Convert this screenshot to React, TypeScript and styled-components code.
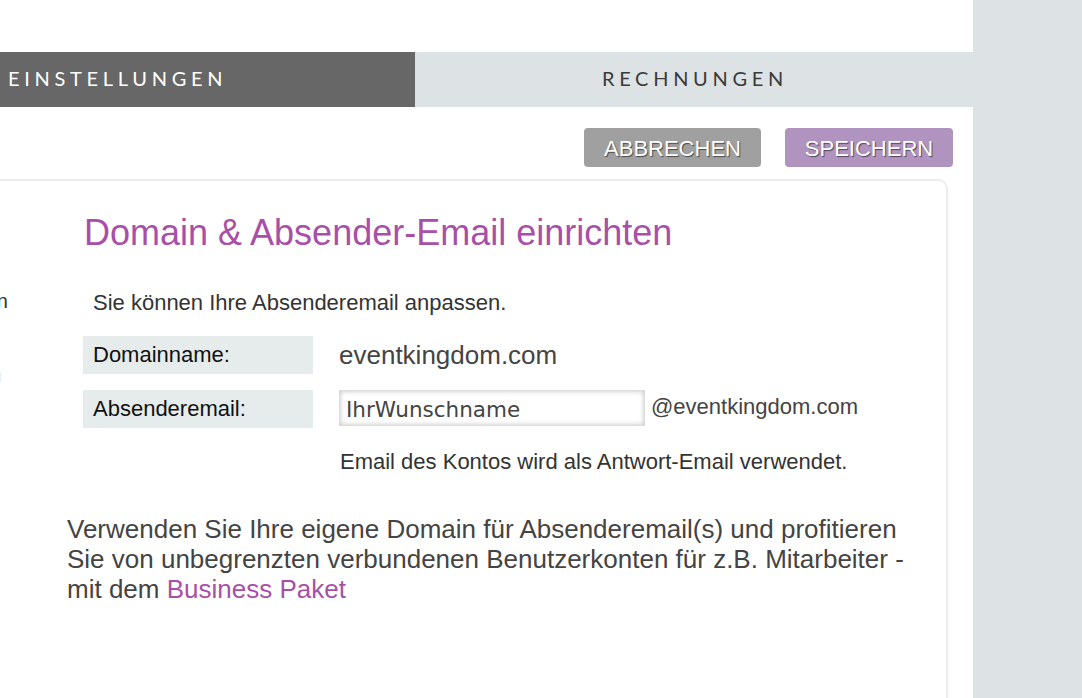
import styled, { createGlobalStyle } from 'styled-components';

const GlobalStyle = createGlobalStyle`
  html, body {
    margin: 0;
    padding: 0;
    background: #ffffff;
    overflow: hidden;
  }
  body {
    font-family: "Liberation Sans", Arial, sans-serif;
  }
`;

function App() {
  return (
    <>
      <GlobalStyle />
      <Page>
        <Main>
          <Tabs>
            <Tab $active>EINSTELLUNGEN</Tab>
            <Tab $center>RECHNUNGEN</Tab>
          </Tabs>
          <Actions>
            <ActionBtn $color="#a0a0a0" $width={177}>ABBRECHEN</ActionBtn>
            <ActionBtn $color="#b094bf" $width={168}>SPEICHERN</ActionBtn>
          </Actions>
          <Card>
            <SideNav>
              <SideItem>Konto einrichten</SideItem>
              <SideItem $faint>Domain einrichten</SideItem>
            </SideNav>
            <Content>
              <Title>Domain &amp; Absender-Email einrichten</Title>
              <Intro>Sie können Ihre Absenderemail anpassen.</Intro>
              <FormRow>
                <Label>Domainname:</Label>
                <Value>eventkingdom.com</Value>
              </FormRow>
              <FormRow>
                <Label>Absenderemail:</Label>
                <Input defaultValue="IhrWunschname" />
                <Suffix>@eventkingdom.com</Suffix>
              </FormRow>
              <Hint>Email des Kontos wird als Antwort-Email verwendet.</Hint>
              <Promo>
                Verwenden Sie Ihre eigene Domain für Absenderemail(s) und profitieren
                Sie von unbegrenzten verbundenen Benutzerkonten für z.B. Mitarbeiter -
                mit dem <PromoLink href="#">Business Paket</PromoLink>
              </Promo>
            </Content>
          </Card>
        </Main>
        <RightPanel />
      </Page>
    </>
  );
}

export default App;

const Page = styled.div`
  display: flex;
  width: 1082px;
  height: 698px;
  overflow: hidden;
`;

const Main = styled.div`
  width: 973px;
  flex: none;
  padding-top: 52px;
  box-sizing: border-box;
`;

const RightPanel = styled.div`
  flex: 1;
  background: #dde2e4;
`;

const Tabs = styled.div`
  display: flex;
  height: 55px;
`;

const Tab = styled.div<{ $active?: boolean; $center?: boolean }>`
  display: flex;
  align-items: center;
  justify-content: ${(p) => (p.$center ? 'center' : 'flex-start')};
  width: ${(p) => (p.$active ? '415px' : 'auto')};
  flex: ${(p) => (p.$active ? 'none' : '1')};
  padding-left: ${(p) => (p.$active ? '8px' : '2px')};
  padding-bottom: 4px;
  box-sizing: border-box;
  background: ${(p) => (p.$active ? '#676767' : '#dde2e5')};
  color: ${(p) => (p.$active ? '#ffffff' : '#3a3a3a')};
  font-family: Lato, "Open Sans", sans-serif;
  font-size: 20px;
  letter-spacing: 4.7px;
`;

const Actions = styled.div`
  display: flex;
  justify-content: flex-end;
  gap: 24px;
  padding: 21px 20px 0 0;
`;

const ActionBtn = styled.button<{ $color: string; $width: number }>`
  width: ${(p) => p.$width}px;
  height: 39px;
  border: none;
  border-radius: 4px;
  background: ${(p) => p.$color};
  color: #ffffff;
  font-family: "Liberation Sans", Arial, sans-serif;
  font-size: 22px;
  line-height: 39px;
  padding: 1px 0 0;
  text-shadow: 1px 1px 1px rgba(0, 0, 0, 0.55);
  cursor: pointer;
`;

const Card = styled.div`
  display: flex;
  margin: 12px 25px 0 -300px;
  height: 600px;
  border: 2px solid #ececec;
  border-radius: 10px;
  background: #ffffff;
`;

const SideNav = styled.div`
  width: 310px;
  flex: none;
  padding-top: 108px;
  display: flex;
  flex-direction: column;
  align-items: flex-end;
  gap: 50px;
  overflow: hidden;
`;

const SideItem = styled.div<{ $faint?: boolean }>`
  font-size: 20px;
  line-height: 24px;
  color: ${(p) => (p.$faint ? '#e4e4e4' : '#333333')};
  white-space: nowrap;
  margin-right: ${(p) => (p.$faint ? '10px' : '4px')};
`;

const Content = styled.div`
  flex: 1;
  padding: 32px 0 0 55px;
`;

const Title = styled.h1`
  margin: 0 0 0 17px;
  font-weight: normal;
  font-size: 36px;
  color: #a850a8;
  line-height: 40px;
`;

const Intro = styled.p`
  margin: 37px 0 20px 26px;
  font-size: 22px;
  line-height: 26px;
  color: #333333;
`;

const FormRow = styled.div`
  display: flex;
  align-items: center;
  margin: 0 0 16px 16px;
`;

const Label = styled.div`
  width: 230px;
  height: 38px;
  box-sizing: border-box;
  padding: 0 0 0 10px;
  display: flex;
  align-items: center;
  background: #e6ecec;
  font-size: 22px;
  color: #111111;
  margin-right: 26px;
`;

const Value = styled.div`
  font-size: 26px;
  line-height: 30px;
  color: #444444;
`;

const Input = styled.input`
  width: 306px;
  height: 36px;
  box-sizing: border-box;
  border: 1px solid #dddddd;
  padding: 3px 6px 0;
  font-family: "DejaVu Sans", sans-serif;
  font-size: 21.5px;
  color: #444444;
  box-shadow: inset 0 0 5px rgba(0, 0, 0, 0.25);
  outline: none;
  margin-top: -2px;
`;

const Suffix = styled.div`
  margin-left: 6px;
  font-size: 22px;
  line-height: 26px;
  color: #444444;
  margin-top: -4px;
`;

const Hint = styled.p`
  margin: 21px 0 0 273px;
  font-size: 22px;
  line-height: 26px;
  color: #333333;
`;

const Promo = styled.p`
  margin: 39px 0 0 0;
  width: 850px;
  font-size: 26px;
  line-height: 30px;
  color: #444444;
`;

const PromoLink = styled.a`
  color: #a850a8;
  text-decoration: none;
`;
